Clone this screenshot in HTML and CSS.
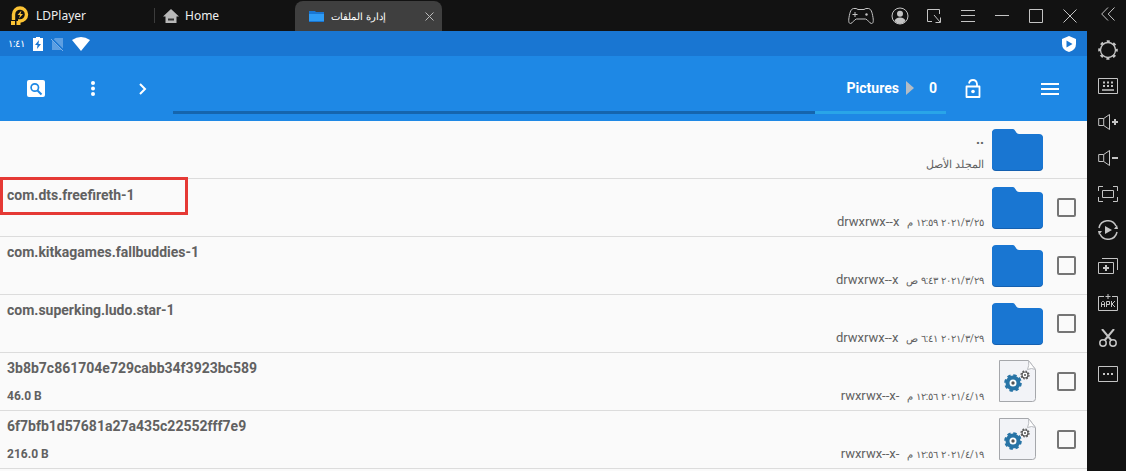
FILE: index.html
```html
<!DOCTYPE html>
<html lang="ar">
<head>
<meta charset="utf-8">
<title>LDPlayer</title>
<link rel="stylesheet" href="styles.css">
</head>
<body>
<svg class="defs" aria-hidden="true">
  <symbol id="folder" viewBox="0 0 52 44">
    <path fill="#1460b0" d="M4 2h17c2 0 3 5 6 5h20q4 0 4 4v28q0 4-4 4H4q-4 0-4-4V5q0-3 4-3z"/>
    <path fill="#1976d2" d="M4 1h17c2 0 3 5 6 5h20q4 0 4 4v28q0 4-4 4H4q-4 0-4-4V5q0-4 4-4z"/>
  </symbol>
  <symbol id="doc" viewBox="0 1 40 44">
    <path fill="#f2f3f7" stroke="#a5a7ab" d="M1.500 1.500h29l7 9v29q0 3-3 3h-33z"/>
    <path fill="#fff" stroke="#b9bbc0" d="M30.500 1.500q1 5-1 9 4-2 8 0z"/>
    <circle cx="15" cy="24" r="5.500" fill="#fff" stroke="#2874a6" stroke-width="4"/>
    <circle cx="15" cy="24" r="7.600" fill="none" stroke="#2874a6" stroke-width="2.400" stroke-dasharray="3.400 2.570"/>
    <circle cx="15" cy="24" r="1.700" fill="#555"/>
    <circle cx="27" cy="16" r="3" fill="#fff" stroke="#555" stroke-width="1.200"/>
    <circle cx="27" cy="16" r="4" fill="none" stroke="#555" stroke-width="1.200" stroke-dasharray="1.700 1.440"/>
    <circle cx="27" cy="16" r="1" fill="#555"/>
  </symbol>
</svg>
<div class="window">
  <header class="titlebar">
    <div class="brand">
      <svg width="20" height="20" viewBox="0 0 20 20"><path d="M3.500 14V8.500a6.500 6.500 0 1 1 6.500 6.500H8" fill="none" stroke="#fbc334" stroke-width="3.400"/><path d="M1 15h4v4H1zM6.500 15h4v4h-4z" fill="#fbc334"/><path d="M11.500 4.500l-4 4.500h2.500l-1 3.500 4-4.500h-2.500z" fill="#fbc334"/></svg>
      <span>LDPlayer</span>
    </div>
    <a class="home" href="#"><svg width="16" height="14" viewBox="0 0 16 14"><path d="M8 0l8 7.500h-2.500V14h-11V7.500H0z" fill="#b8b8b8"/><path d="M5 10.500h6" stroke="#333" stroke-width="2"/></svg><span>Home</span></a>
    <div class="tab">
      <svg width="15" height="12" viewBox="0 0 15 12"><path d="M0 1h6l1 1h8v10H0z" fill="#1976d2"/><path d="M0 4h15v7H0z" fill="#2f9bf4"/></svg>
      <span class="tab-title">إدارة الملفات</span>
      <button class="tab-close" aria-label="Close tab"><svg width="9" height="9" viewBox="0 0 9 9"><path d="M.5.5l8 8M8.500.5l-8 8" stroke="#bbb"/></svg></button>
    </div>
    <div class="controls">
      <button aria-label="Gamepad"><svg width="28" height="20" viewBox="0 0 28 20"><path d="M6.500 2.500q3-.5 4.500 1h6q1.500-1.500 4.500-1c2.500.5 3.500 3 4.500 9 .7 4.500 0 6-1.500 6-2 0-4-4.500-6-4.500h-9c-2 0-4 4.500-6 4.500-1.500 0-2.200-1.500-1.500-6 1-6 2-8.500 4.500-9z"/><path d="M5.500 8.500h5M8 6v5"/><circle cx="19.500" cy="8.500" r="1.200" class="solid"/></svg></button>
      <button aria-label="Account"><svg width="18" height="18" viewBox="0 0 18 18"><circle cx="9" cy="9" r="8"/><circle cx="9" cy="6.800" r="3" class="solid"/><path class="solid" d="M3.500 14q1-3.500 5.500-3.500t5.500 3.500Q12 17 9 17t-5.500-3z"/></svg></button>
      <button aria-label="Resize"><svg width="16" height="16" viewBox="0 0 16 16"><path d="M6 13.500H1.500v-12h12V6M8 7l6 7M14.500 9.500v5h-5"/></svg></button>
      <button aria-label="Menu"><svg width="14" height="12" viewBox="0 0 14 12"><path d="M0 .5h14M0 5.500h14M0 11.500h14"/></svg></button>
      <button aria-label="Minimize"><svg width="14" height="12" viewBox="0 0 14 12"><path d="M0 5.500h14"/></svg></button>
      <button aria-label="Maximize"><svg width="14" height="14" viewBox="0 0 14 14"><path d="M.5.5h13v13H.5z"/></svg></button>
      <button aria-label="Close"><svg width="14" height="14" viewBox="0 0 14 14"><path d="M.5.5l13 13M13.500.5l-13 13"/></svg></button>
    </div>
  </header>
  <main class="screen">
    <div class="status">
      <span class="clock">١:٤١</span>
      <svg width="10" height="14" viewBox="0 0 10 14"><path fill="#fff" d="M3 0h4v1h3v13H0V1h3z"/><path fill="#1976d2" d="M6 3L2 8h2.500L4 12l4-5H5.500z"/></svg>
      <svg width="13" height="14" viewBox="0 0 13 14"><path fill="#5d9fe2" d="M4 1h8v12H1V4z"/><path d="M0 1l12 12" stroke="#1976d2" stroke-width="2"/><path d="M0 2l12 12" stroke="#78b0ea"/></svg>
      <svg width="18" height="14" viewBox="0 0 18 14"><path fill="#fff" d="M0 3q9-6 18 0L9 14z"/></svg>
      <svg class="shield" width="14" height="16" viewBox="0 0 14 16"><path fill="#fff" d="M7 0l7 3v5q0 6-7 8-7-2-7-8V3z"/><path fill="#1976d2" d="M4.500 4.500l6 3.500-6 3.500z"/></svg>
    </div>
    <nav class="toolbar">
      <div class="tools">
        <button aria-label="Search"><svg width="18" height="18" viewBox="0 0 18 18"><rect width="18" height="17" rx="2" fill="#fff"/><circle cx="7.800" cy="7.500" r="3.700" fill="none" stroke="#1e88e5" stroke-width="1.700"/><path d="M10.500 10.500l4 4" stroke="#1e88e5" stroke-width="2"/></svg></button>
        <button aria-label="More"><svg width="4" height="16" viewBox="0 0 4 16"><g fill="#fff"><circle cx="2" cy="2" r="2"/><circle cx="2" cy="7.500" r="2"/><circle cx="2" cy="13" r="2"/></g></svg></button>
        <button aria-label="Forward"><svg width="8" height="12" viewBox="0 0 8 12"><path d="M1 1l5 5-5 5" fill="none" stroke="#fff" stroke-width="2"/></svg></button>
      </div>
      <div class="path">
        <a href="#">Pictures</a>
        <svg width="8" height="14" viewBox="0 0 8 14"><path d="M0 0l8 7-8 7z" fill="#b4bcc4"/></svg>
        <span class="count">0</span>
      </div>
      <div class="actions">
        <button aria-label="Unlock"><svg width="16" height="20" viewBox="0 0 16 20"><path d="M1.500 7.500h13v10.500h-13zM4 4.500q.5-3.500 4-3.500t4 4v2.500" fill="none" stroke="#fff" stroke-width="1.800" stroke-linejoin="round"/><circle cx="8" cy="12.500" r="1.800" fill="#fff"/></svg></button>
        <button aria-label="Navigation"><svg width="18" height="12" viewBox="0 0 18 12"><path d="M0 1h18M0 6h18M0 11h18" stroke="#fff" stroke-width="2"/></svg></button>
      </div>
    </nav>
    <ul class="files">
      <li class="file"><div class="name"></div><div class="meta"><b>..</b><span class="parent" dir="rtl">المجلد الأصل</span></div><svg class="icon"><use href="#folder"/></svg><span class="blank"></span></li>
      <li class="file"><div class="name marked"><strong>com.dts.freefireth-1</strong></div><div class="meta"><div class="info" dir="rtl"><span class="date">٢٠٢١/٣/٢٥ ١٢:٥٩ م</span><span>drwxrwx--x</span></div></div><svg class="icon"><use href="#folder"/></svg><input type="checkbox" aria-label="com.dts.freefireth-1"></li>
      <li class="file"><div class="name"><strong>com.kitkagames.fallbuddies-1</strong></div><div class="meta"><div class="info" dir="rtl"><span class="date">٢٠٢١/٣/٢٩ ٩:٤٣ ص</span><span>drwxrwx--x</span></div></div><svg class="icon"><use href="#folder"/></svg><input type="checkbox" aria-label="com.kitkagames.fallbuddies-1"></li>
      <li class="file"><div class="name"><strong>com.superking.ludo.star-1</strong></div><div class="meta"><div class="info" dir="rtl"><span class="date">٢٠٢١/٣/٢٩ ٦:٤١ ص</span><span>drwxrwx--x</span></div></div><svg class="icon"><use href="#folder"/></svg><input type="checkbox" aria-label="com.superking.ludo.star-1"></li>
      <li class="file"><div class="name"><strong>3b8b7c861704e729cabb34f3923bc589</strong><small>46.0 B</small></div><div class="meta"><div class="info" dir="rtl"><span class="date">٢٠٢١/٤/١٩ ١٢:٥٦ م</span><span>-rwxrwx--x</span></div></div><svg class="icon"><use href="#doc"/></svg><input type="checkbox" aria-label="3b8b7c861704e729cabb34f3923bc589"></li>
      <li class="file"><div class="name"><strong>6f7bfb1d57681a27a435c22552fff7e9</strong><small>216.0 B</small></div><div class="meta"><div class="info" dir="rtl"><span class="date">٢٠٢١/٤/١٩ ١٢:٥٦ م</span><span>-rwxrwx--x</span></div></div><svg class="icon"><use href="#doc"/></svg><input type="checkbox" aria-label="6f7bfb1d57681a27a435c22552fff7e9"></li>
    </ul>
  </main>
</div>
<aside class="sidebar">
  <button class="collapse" aria-label="Collapse"><svg width="14" height="14" viewBox="0 0 14 14"><path d="M7 .5L.7 7 7 13.500M13.500.5L7.200 7l6.300 6.500"/></svg></button>
  <button aria-label="Settings"><svg width="20" height="20" viewBox="0 0 20 20"><circle cx="10" cy="10" r="7.500" stroke-width="1.300"/><circle cx="10" cy="10" r="8.600" stroke-width="2.400" stroke-dasharray="3 3.754" stroke-dashoffset="1.500"/></svg></button>
  <button aria-label="Keyboard"><svg width="20" height="16" viewBox="0 0 20 16"><path d="M.5.5h19v15H.5z"/><path d="M4 12h12" stroke-width="1.500"/><path d="M5 4.500h2M9 4.500h2M13 4.500h2M5 8h2M9 8h2M13 8h2" stroke-width="2"/></svg></button>
  <button aria-label="Volume up"><svg width="20" height="16" viewBox="0 0 20 16"><path d="M.7 4.500h5v7h-5zM5.700 4.500l5.800-4v15l-5.800-4"/><path d="M14 8h6M17 5v6" stroke-width="2"/></svg></button>
  <button aria-label="Volume down"><svg width="20" height="16" viewBox="0 0 20 16"><path d="M.7 4.500h5v7h-5zM5.700 4.500l5.800-4v15l-5.800-4"/><path d="M14 8h6" stroke-width="2"/></svg></button>
  <button aria-label="Full screen"><svg width="20" height="16" viewBox="0 0 20 16"><path d="M5 .5H.5V5M15 .5h4.500V5M.5 11v4.500H5M19.500 11v4.500H15M4.500 4.500h11v7h-11z"/></svg></button>
  <button aria-label="Synchronizer"><svg width="20" height="20" viewBox="0 0 20 20"><path d="M1 8a9 9 0 0 1 17-2M19 12a9 9 0 0 1-17 2" stroke-width="1.500"/><path class="solid" d="M16 9l4 0-1-4zM4 11H0l1 4zM7 6l7 4-7 4z"/></svg></button>
  <button aria-label="Multi-instance"><svg width="20" height="16" viewBox="0 0 20 16"><path d="M.5 4.500h15v11H.5zM4 .5h15.500V12"/><path d="M5 10h6M8 7v6" stroke-width="2"/></svg></button>
  <button aria-label="Install APK"><svg width="20" height="18" viewBox="0 0 20 18"><path d="M6 3.500H.5v14h19v-14H14M7.500 3.500h5M10 1v5"/><path d="M3.500 14V9.500l1-1h1l1 1V14M3.500 11.500h3M8.500 14V8.500h3v3h-3M13.500 8v6M17 8l-3 3 3 3"/></svg></button>
  <button aria-label="Screenshot"><svg width="18" height="18" viewBox="0 0 18 18"><g stroke-width="1.500"><circle cx="4" cy="14" r="3.200"/><circle cx="14" cy="14" r="3.200"/></g><path d="M3 0l9.500 11.500M15 0L5.500 11.500" stroke-width="2"/></svg></button>
  <button aria-label="More"><svg width="20" height="16" viewBox="0 0 20 16"><path d="M.5.5h19v15H.5z"/><path d="M5 8h2M9 8h2M13 8h2" stroke-width="2"/></svg></button>
</aside>
</body>
</html>
```

FILE: styles.css
```css
* { box-sizing: border-box; }
body { margin: 0; min-height: 100vh; display: flex; background: #121212; font-family: Roboto, "Noto Sans", sans-serif; overflow: hidden; }
button { display: flex; align-items: center; justify-content: center; margin: 0; padding: 0; border: 0; background: none; }
a { color: inherit; text-decoration: none; }
svg { flex: none; }
.defs { position: absolute; width: 0; height: 0; }
.window { flex: 1; display: flex; flex-direction: column; height: 100vh; min-width: 0; }
.titlebar { display: flex; align-items: stretch; height: 31px; color: #eee; font: 12px "Noto Sans", sans-serif; }
.brand { display: flex; align-items: center; gap: 6px; width: 155px; margin: 8px 0; padding-left: 10px; border-right: 1px solid #3c3c3c; }
.home { display: flex; align-items: center; gap: 6px; width: 140px; padding-left: 8px; }
.tab { display: flex; align-items: center; width: 147px; margin-top: 1px; padding: 0 8px 0 14px; gap: 7px; border-radius: 8px 8px 0 0; background: #3f3f3f; }
.tab-title { flex: 1; font-size: 10px; color: #fff; }
.tab-close { width: 9px; }
.controls { display: flex; align-items: center; margin-left: auto; }
.controls button { width: 34px; height: 28px; }
.controls button:first-child { width: 44px; }
.controls svg, .sidebar svg { fill: none; stroke: #c4c4c4; }
.controls .solid, .sidebar .solid { fill: #c4c4c4; stroke: none; }
.screen { flex: 1; display: flex; flex-direction: column; min-height: 0; background: #fafafa; }
.status { display: flex; align-items: center; gap: 8px; height: 25px; padding: 0 11px 0 8px; background: #1976d2; color: #fff; }
.clock { font-size: 10px; line-height: 16px; }
.shield { margin-left: auto; }
.toolbar { display: flex; height: 65px; background: #1e88e5; color: #fff; }
.tools { display: flex; align-items: center; width: 173px; padding-left: 7px; }
.tools button { width: 57px; height: 48px; }
.tools button:last-child { width: 44px; }
.path { flex: 1; display: flex; align-items: center; justify-content: flex-end; gap: 7px; height: 58px; padding: 9px 9px 0 0; border-bottom: 3px solid; border-image: linear-gradient(90deg, #1565ad 83%, #29a5e8 83%) 1; font-size: 14px; font-weight: 700; }
.count { margin-left: 8px; }
.actions { display: flex; align-items: center; justify-content: space-between; width: 141px; padding: 0 28px 0 19px; }
.files { margin: 0; padding: 0; list-style: none; overflow: hidden; }
.file { display: flex; align-items: center; height: 58px; padding-right: 11px; border-bottom: 1px solid #dcdcdc; color: #616161; }
.name { display: flex; flex-direction: column; align-self: stretch; justify-content: space-between; padding: 6px 0 6px 7px; }
.name strong { font-size: 14px; line-height: 18px; }
.name small { font-size: 12px; line-height: 16px; font-weight: 700; }
.marked { align-self: flex-start; justify-content: flex-start; width: 188px; height: 38px; margin-top: -2px; padding: 6px 0 0 4px; border: 3px solid #e53935; }
.meta { flex: 1; display: flex; flex-direction: column; align-items: flex-end; justify-content: flex-end; align-self: stretch; padding: 0 8px 5px 0; font-size: 13px; line-height: 16px; }
.meta b { font-size: 14px; margin-bottom: 10px; }
.parent { font-size: 11px; }
.info { display: flex; align-items: baseline; gap: 8px; }
.date { font-size: 10px; }
.icon { width: 52px; height: 44px; }
.file input { appearance: none; width: 19px; height: 19px; margin: 0 0 0 13px; border: 2px solid #757575; border-radius: 2px; }
.blank { width: 32px; }
.sidebar { display: flex; flex-direction: column; align-items: center; width: 39px; height: 100vh; padding-left: 3px; }
.sidebar button { width: 36px; height: 36px; }
.sidebar .collapse { height: 28px; margin-bottom: 4px; }
```
